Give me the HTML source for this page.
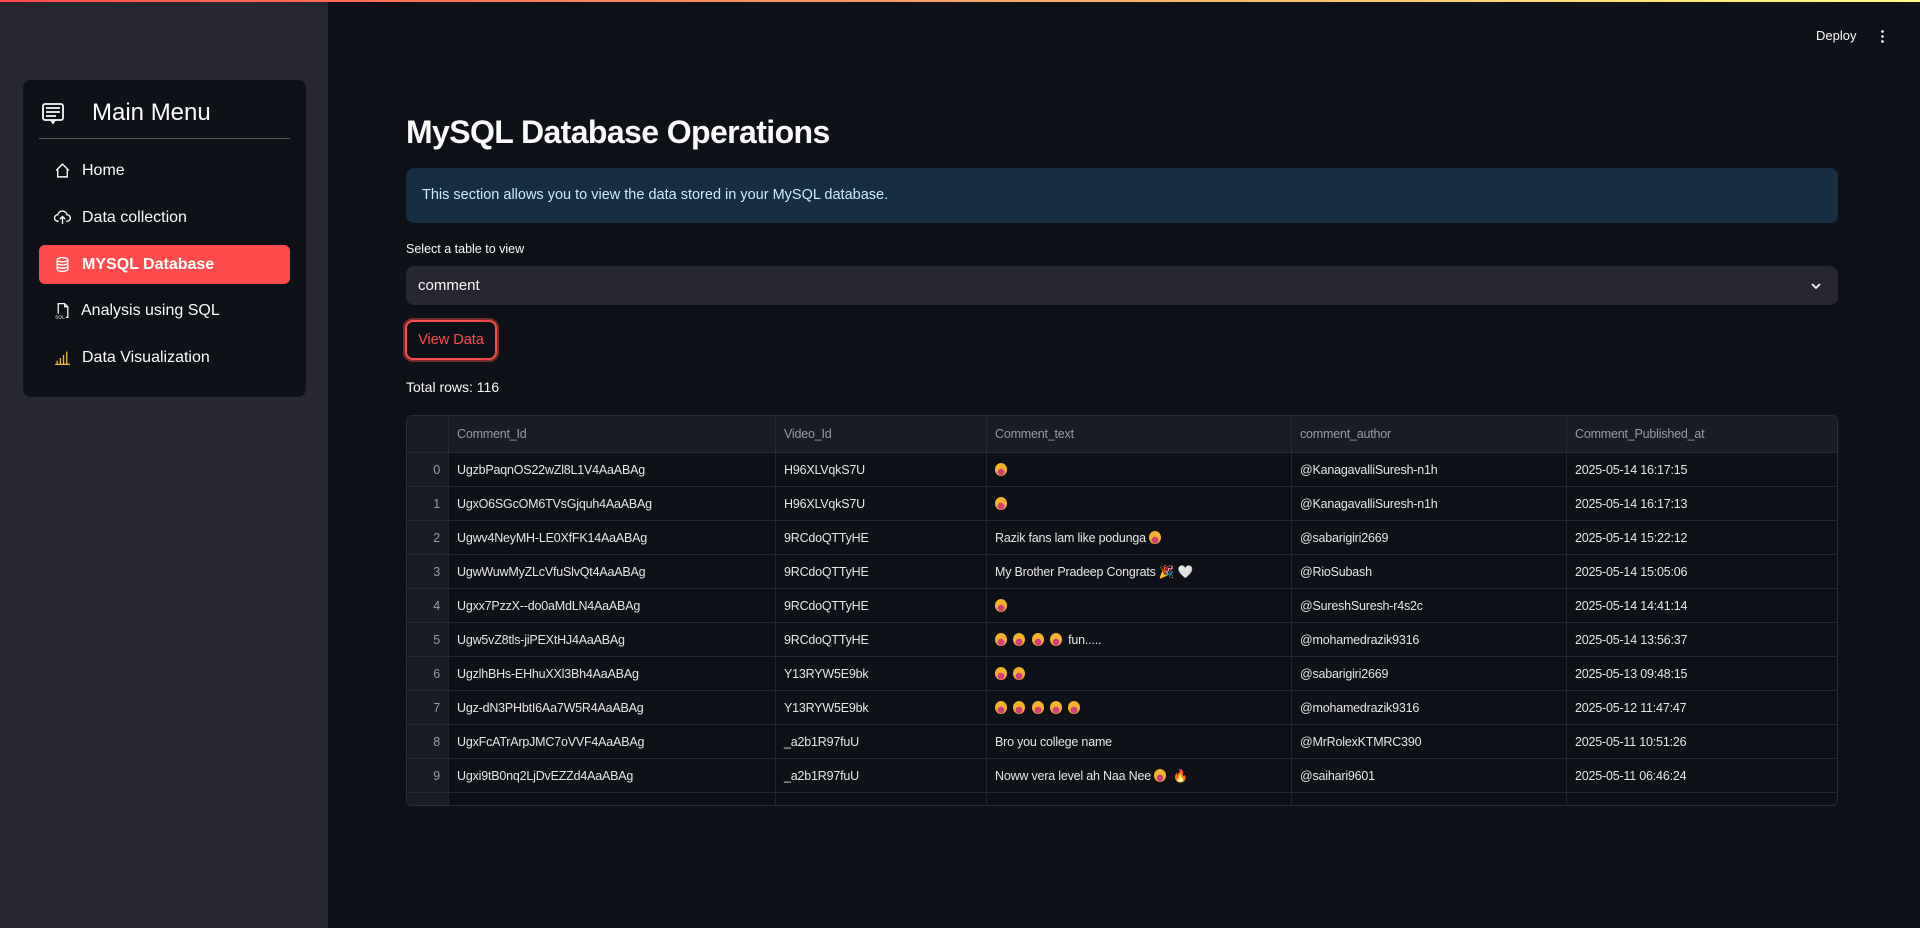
<!DOCTYPE html>
<html><head><meta charset="utf-8"><style>
*{box-sizing:border-box;margin:0;padding:0}
body{width:1920px;height:928px;background:#0e1117;font-family:"Liberation Sans",sans-serif;color:#fafafa;position:relative;overflow:hidden}
.topline{position:absolute;left:0;top:0;width:1920px;height:2px;background:linear-gradient(90deg,#ff4b4b,#fffd80)}
.side{position:absolute;left:0;top:2px;width:328px;height:926px;background:#262730}
.menu{position:absolute;left:23px;top:78px;width:283px;height:317px;background:#0e1117;border-radius:8px}
.mt{position:absolute;left:69px;top:19px;font-size:24px;color:#fafafa}
.div{position:absolute;left:16px;top:58px;width:251px;height:1px;background:#555}
.it{position:absolute;left:16px;width:251px;height:39px;border-radius:6px;font-size:16px;line-height:39px;padding-left:43px;color:#fafafa}
.it svg{position:absolute;left:15px;top:11px}
.act{background:#ff4b4b;font-weight:bold;color:#fff}
.abs{position:absolute}
h1{position:absolute;left:406px;top:114px;font-size:32px;font-weight:bold;letter-spacing:-0.6px;color:#fafafa}
.info{position:absolute;left:406px;top:168px;width:1432px;height:55px;background:#172d43;border-radius:8px;color:#c7ebff;font-size:14.5px;line-height:55px;padding-left:16px}
.lbl{position:absolute;left:406px;top:242px;font-size:12.5px;color:#fafafa}
.sel{position:absolute;left:406px;top:266px;width:1432px;height:39px;background:#262730;border-radius:8px;font-size:15px;line-height:39px;padding-left:12px}
.btn{position:absolute;left:405px;top:320px;width:92px;height:40px;border:2px solid #ff4b4b;border-radius:8px;box-shadow:0 0 0 2px rgba(255,75,75,.45);color:#ff4b4b;font-size:14.5px;line-height:36px;text-align:center}
.tot{position:absolute;left:406px;top:379px;font-size:14px}
.tbl{position:absolute;left:406px;top:415px;width:1432px;height:391px;border:1px solid #2b2d36;border-radius:6px;overflow:hidden;background:#0e1117}
.row{position:absolute;left:0;width:1432px;height:34px;border-bottom:1px solid #262730;font-size:12.5px;letter-spacing:-0.2px}
.hdr{background:#1a1c24;height:37px;color:#9a9ca4}
.c{position:absolute;top:0;height:100%;border-right:1px solid #262730;padding-left:8px;white-space:nowrap;overflow:hidden;line-height:34px;color:#e6e6e6}
.hdr .c{line-height:37px;color:#9a9ca4}
.i{text-align:right;padding-right:8px;padding-left:0;color:#9a9ca4;background:#1a1c24}
.e{display:inline-block;width:12px;height:13px;border-radius:50%;background:radial-gradient(circle at 50% 70%,#d43f7a 0 30%,transparent 32%),#f4b22c;vertical-align:-2px;margin-right:3px}
</style></head><body>
<div class="topline"></div>
<div class="side">
<div class="menu">
<svg class="abs" style="left:18px;top:22px" width="24" height="24" viewBox="0 0 24 24" fill="none" stroke="#fafafa" stroke-width="1.8"><rect x="2" y="2" width="20" height="16" rx="2"/><path d="M5 6h14M5 10h14M5 14h10M10 18l2 3 2-3"/></svg>
<div class="mt">Main Menu</div>
<div class="div"></div>
<div class="it" style="top:71px"><svg width="17" height="17" viewBox="0 0 16 16" fill="none" stroke="#fafafa" stroke-width="1.3"><path d="M2 8L8 2l6 6M3.5 6.5V14h9V6.5"/></svg>Home</div>
<div class="it" style="top:118px"><svg width="17" height="17" viewBox="0 0 16 16" fill="none" stroke="#fafafa" stroke-width="1.3"><path d="M4.5 11.5H3.5a3 3 0 010-6 4.5 4.5 0 018.8 0 3 3 0 01.2 6h-1M8 14V7M5.5 9.5L8 7l2.5 2.5"/></svg>Data collection</div>
<div class="it act" style="top:165px"><svg width="17" height="17" viewBox="0 0 16 16" fill="none" stroke="#fff" stroke-width="1.3"><ellipse cx="8" cy="3.5" rx="5" ry="2"/><path d="M3 3.5v9c0 1.1 2.2 2 5 2s5-.9 5-2v-9M3 6.5c0 1.1 2.2 2 5 2s5-.9 5-2M3 9.5c0 1.1 2.2 2 5 2s5-.9 5-2"/></svg>MYSQL Database</div>
<div class="it" style="top:211px;padding-left:42px"><svg width="17" height="17" viewBox="0 0 16 16" fill="none" stroke="#fafafa" stroke-width="1.2"><path d="M4 11V1.5h6l3 3V14.5h-2M10 1.5v3h3"/><text x="1" y="15.5" font-size="4.5" fill="#fafafa" stroke="none" font-family="Liberation Sans">SQL</text></svg>Analysis using SQL</div>
<div class="it" style="top:258px"><svg width="17" height="17" viewBox="0 0 16 16" fill="none" stroke="#f0c040" stroke-width="1.2"><path d="M1 14.5h14M3 14V11M6 14V8.5M9 14V5.5M12 14V2.5"/></svg>Data Visualization</div>
</div>
</div>
<div class="abs" style="left:1816px;top:28px;font-size:13px">Deploy</div>
<div class="abs" style="left:1881px;top:29px;width:3px;height:14px;background:radial-gradient(circle,#fafafa 1.2px,transparent 1.5px) 0 0/3px 5px"></div>
<h1>MySQL Database Operations</h1>
<div class="info">This section allows you to view the data stored in your MySQL database.</div>
<div class="lbl">Select a table to view</div>
<div class="sel">comment<svg class="abs" style="left:1404px;top:14px" width="12" height="12" viewBox="0 0 12 12" fill="none" stroke="#fafafa" stroke-width="1.8"><path d="M2 4l4 4 4-4"/></svg></div>
<div class="btn">View Data</div>
<div class="tot">Total rows: 116</div>
<div class="tbl">
<div class="row hdr" style="top:0"><div class="c i" style="left:0;width:42px"></div><div class="c" style="left:42px;width:327px">Comment_Id</div><div class="c" style="left:369px;width:211px">Video_Id</div><div class="c" style="left:580px;width:305px">Comment_text</div><div class="c" style="left:885px;width:275px">comment_author</div><div class="c" style="left:1160px;width:272px;border-right:0">Comment_Published_at</div></div>
</div>
<script>
var d=[["UgzbPaqnOS22wZl8L1V4AaABAg","H96XLVqkS7U","E","@KanagavalliSuresh-n1h","2025-05-14 16:17:15"],
["UgxO6SGcOM6TVsGjquh4AaABAg","H96XLVqkS7U","E","@KanagavalliSuresh-n1h","2025-05-14 16:17:13"],
["Ugwv4NeyMH-LE0XfFK14AaABAg","9RCdoQTTyHE","Razik fans lam like podunga E","@sabarigiri2669","2025-05-14 15:22:12"],
["UgwWuwMyZLcVfuSlvQt4AaABAg","9RCdoQTTyHE","My Brother Pradeep Congrats 🎉 🤍","@RioSubash","2025-05-14 15:05:06"],
["Ugxx7PzzX--do0aMdLN4AaABAg","9RCdoQTTyHE","E","@SureshSuresh-r4s2c","2025-05-14 14:41:14"],
["Ugw5vZ8tls-jiPEXtHJ4AaABAg","9RCdoQTTyHE","E E E E fun.....","@mohamedrazik9316","2025-05-14 13:56:37"],
["UgzlhBHs-EHhuXXl3Bh4AaABAg","Y13RYW5E9bk","E E","@sabarigiri2669","2025-05-13 09:48:15"],
["Ugz-dN3PHbtI6Aa7W5R4AaABAg","Y13RYW5E9bk","E E E E E","@mohamedrazik9316","2025-05-12 11:47:47"],
["UgxFcATrArpJMC7oVVF4AaABAg","_a2b1R97fuU","Bro you college name","@MrRolexKTMRC390","2025-05-11 10:51:26"],
["Ugxi9tB0nq2LjDvEZZd4AaABAg","_a2b1R97fuU","Noww vera level ah Naa Nee E 🔥","@saihari9601","2025-05-11 06:46:24"],
["","","","",""]];
var L=[42,369,580,885,1160],W=[327,211,305,275,272],t=document.querySelector('.tbl'),h='';
d.forEach(function(r,k){h+='<div class="row" style="top:'+(37+k*34)+'px"><div class="c i" style="left:0;width:42px">'+(k<10?k:'')+'</div>';
r.forEach(function(v,j){v=v.split(' ').map(function(w){return w=='E'?'<span class="e"></span>':w}).join(' ');h+='<div class="c" style="left:'+L[j]+'px;width:'+W[j]+'px'+(j==4?';border-right:0':'')+'">'+v+'</div>'});h+='</div>'});
t.innerHTML+=h;
</script>
</body></html>
